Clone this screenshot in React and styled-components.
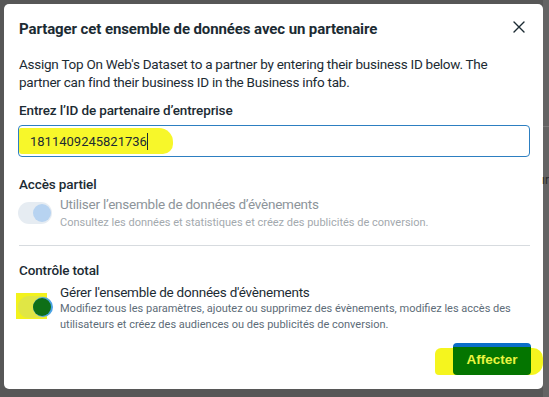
import React from "react";
import styled, { createGlobalStyle } from "styled-components";

const Global = createGlobalStyle`
  html, body { margin: 0; padding: 0; }
  body {
    background: #575757;
    font-family: Roboto, "Noto Sans", "Liberation Sans", sans-serif;
    -webkit-font-smoothing: antialiased;
  }
`;

const Page = styled.div`
  width: 549px;
  height: 397px;
  display: flex;
  padding: 4px 0 0 4px;
  box-sizing: border-box;
  overflow: hidden;
`;

const Dialog = styled.div`
  width: 539px;
  height: 385px;
  flex: none;
  background: #fff;
  border-radius: 5px;
  box-sizing: border-box;
  padding: 14px 13px 0 15px;
  display: flex;
  flex-direction: column;
  color: #1c2b33;
`;

const Behind = styled.div`
  flex: 1;
  height: 340px;
  margin-top: -4px;
  background: #646464;
  display: flex;
  flex-direction: column;
  padding-top: 126px;
  gap: 47px;
`;

const BehindLine = styled.div`
  height: 1px;
  background: #7a7a7a;
`;

const BehindGlyph = styled.div`
  font-size: 12px;
  line-height: 12px;
  color: #2a2a2a;
  margin-left: -1px;
  overflow: hidden;
`;

const Header = styled.div`
  display: flex;
  justify-content: space-between;
  align-items: center;
  height: 22px;
`;

const Title = styled.h1`
  margin: 0;
  font-size: 15px;
  font-weight: 700;
  letter-spacing: -0.1px;
  line-height: 22px;
`;

const Close = styled.button`
  border: 0;
  background: none;
  padding: 0;
  width: 20px;
  height: 20px;
  display: flex;
  align-items: center;
  justify-content: center;
  margin-right: 1px;
  margin-top: -4px;
`;

const Desc = styled.p`
  margin: 15px 0 0 0;
  max-width: 478px;
  font-size: 13.5px;
  letter-spacing: -0.25px;
  line-height: 18px;
  color: #1c2b33;
`;

const Label = styled.div`
  margin: ${(p) => p.mt}px 0 0 0;
  font-size: 13.5px;
  letter-spacing: -0.13px;
  font-weight: 500;
  line-height: 18px;
`;

const InputBox = styled.div`
  margin: 6px 0 0 -1px;
  height: 32px;
  border: 1px solid #2d7fc1;
  border-radius: 4px;
  box-sizing: border-box;
  display: flex;
  align-items: center;
  position: relative;
`;

const Marker = styled.span`
  position: absolute;
  left: 0;
  top: 2px;
  width: 154px;
  height: 26px;
  background: #f7f72a;
  border-radius: 2px 14px 10px 3px;
`;

const InputText = styled.span`
  position: relative;
  margin-left: 11px;
  font-size: 13px;
  color: #1c2b33;
  display: flex;
  align-items: center;
`;

const Caret = styled.span`
  display: inline-block;
  width: 1px;
  height: 17px;
  background: #1c2b33;
`;

const Option = styled.div`
  display: flex;
  gap: 8px;
  margin: ${(p) => p.mt}px 0 0 -1px;
`;

const SwitchWrap = styled.div`
  position: relative;
  width: 34px;
  height: 22px;
  flex: none;
  margin-top: ${(p) => p.mt}px;
`;

const Highlight = styled.span`
  position: absolute;
  left: -2px;
  top: -3px;
  width: 31px;
  height: 26px;
  background: #f2f21c;
`;

const Track = styled.span`
  position: absolute;
  left: 0;
  top: 0;
  width: 34px;
  height: 22px;
  border-radius: 11px;
  background: ${(p) => p.bg};
`;

const Knob = styled.span`
  position: absolute;
  right: 1px;
  top: 2px;
  width: 18px;
  height: 18px;
  border-radius: 50%;
  background: ${(p) => p.bg};
  box-shadow: ${(p) => p.ring};
`;

const OptText = styled.div`
  display: flex;
  flex-direction: column;
`;

const OptTitle = styled.div`
  font-size: 13.5px;
  letter-spacing: -0.23px;
  line-height: 18px;
  color: ${(p) => (p.disabled ? "#8d949a" : "#1c2b33")};
`;

const OptSub = styled.div`
  font-size: 11px;
  line-height: 16px;
  margin-top: ${(p) => p.mt}px;
  color: ${(p) => (p.disabled ? "#a3a9ae" : "#5d6c78")};
`;

const Divider = styled.div`
  height: 1px;
  background: #d7dbdf;
  margin: 14px 0 0 0;
`;

const Footer = styled.div`
  display: flex;
  justify-content: flex-end;
  margin-top: 10px;
  position: relative;
`;

const BtnMarker = styled.span`
  position: absolute;
  right: -13px;
  top: 5px;
  width: 108px;
  height: 27px;
  background: #f5f51e;
  border-radius: 6px 10px 12px 4px;
`;

const Button = styled.button`
  position: relative;
  width: 78px;
  height: 32px;
  margin-right: -1px;
  border: 0;
  border-radius: 4px;
  background: #047500;
  border-top: 4px solid #0a6ec9;
  color: #e9f540;
  font-family: "Liberation Sans", Arial, sans-serif;
  font-weight: 700;
  font-size: 13.5px;
  padding: 0 0 3px 0;
`;

function XIcon() {
  return (
    <svg width="12" height="12" viewBox="0 0 12 12">
      <path d="M1 1 L11 11 M11 1 L1 11" stroke="#1c2b33" strokeWidth="1.4" strokeLinecap="round" />
    </svg>
  );
}

function Switch({ on, disabled, mt }) {
  return (
    <SwitchWrap mt={mt}>
      {on && <Highlight />}
      {disabled ? (
        <>
          <Track bg="#e6ecf2" />
          <Knob bg="#b7d3f1" ring="none" />
        </>
      ) : (
        <>
          <Track bg="#e0e645" />
          <Knob bg="#0e6f17" ring="1px 0 0 1px #4aa2e6" />
        </>
      )}
    </SwitchWrap>
  );
}

export default function App() {
  return (
    <>
      <Global />
      <Page>
        <Dialog>
          <Header>
            <Title>Partager cet ensemble de données avec un partenaire</Title>
            <Close aria-label="Fermer">
              <XIcon />
            </Close>
          </Header>
          <Desc>
            Assign Top On Web's Dataset to a partner by entering their business ID below. The
            partner can find their business ID in the Business info tab.
          </Desc>
          <Label mt={10}>Entrez l’ID de partenaire d’entreprise</Label>
          <InputBox>
            <Marker />
            <InputText>
              1811409245821736
              <Caret />
            </InputText>
          </InputBox>
          <Label mt={18}>Accès partiel</Label>
          <Option mt={2}>
            <Switch disabled mt={7} />
            <OptText>
              <OptTitle disabled>Utiliser l’ensemble de données d’évènements</OptTitle>
              <OptSub disabled mt={2}>
                Consultez les données et statistiques et créez des publicités de conversion.
              </OptSub>
            </OptText>
          </Option>
          <Divider />
          <Label mt={15}>Contrôle total</Label>
          <Option mt={4}>
            <Switch on mt={13} />
            <OptText>
              <OptTitle>Gérer l'ensemble de données d'évènements</OptTitle>
              <OptSub mt={0}>
                Modifiez tous les paramètres, ajoutez ou supprimez des évènements, modifiez les accès des
                utilisateurs et créez des audiences ou des publicités de conversion.
              </OptSub>
            </OptText>
          </Option>
          <Footer>
            <BtnMarker />
            <Button>Affecter</Button>
          </Footer>
        </Dialog>
        <Behind>
          <BehindLine />
          <BehindGlyph>ır</BehindGlyph>
        </Behind>
      </Page>
    </>
  );
}
